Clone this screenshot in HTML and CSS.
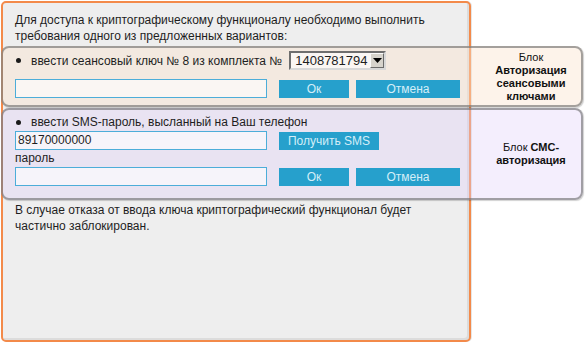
FILE: index.html
```html
<!DOCTYPE html>
<html lang="ru">
<head>
<meta charset="utf-8">
<title>Авторизация</title>
<link rel="stylesheet" href="styles.css">
</head>
<body>
<div class="panel">
  <p class="intro">Для доступа к криптографическому функционалу необходимо выполнить<br>требования одного из предложенных вариантов:</p>

  <div class="block block-keys">
    <div class="block-main">
      <div class="row bullet-row">
        <span class="dot"></span>
        <span class="label-text">ввести сеансовый ключ № 8 из комплекта №</span>
        <div class="select">
          <span class="select-value">1408781794</span>
          <span class="select-arrow"><svg width="9" height="5" viewBox="0 0 9 5"><path d="M0 0h9L4.5 5z" fill="#000"/></svg></span>
        </div>
      </div>
      <div class="row input-row">
        <div class="input"></div>
        <button class="btn btn-ok">Ок</button>
        <button class="btn btn-cancel">Отмена</button>
      </div>
    </div>
    <div class="block-label"><div>Блок<br><b>Авторизация сеансовыми ключами</b></div></div>
  </div>

  <div class="block block-sms">
    <div class="block-main">
      <div class="row text-row">
        <span class="dot"></span>
        <span class="label-text">ввести SMS-пароль, высланный на Ваш телефон</span>
      </div>
      <div class="row input-row tight">
        <div class="input">89170000000</div>
        <button class="btn btn-sms">Получить SMS</button>
      </div>
      <div class="field-label">пароль</div>
      <div class="row input-row tight">
        <div class="input"></div>
        <button class="btn btn-ok">Ок</button>
        <button class="btn btn-cancel">Отмена</button>
      </div>
    </div>
    <div class="block-label"><div>Блок <b>СМС-</b><br><b>авторизация</b></div></div>
  </div>

  <p class="outro">В случае отказа от ввода ключа криптографический функционал будет<br>частично заблокирован.</p>
</div>
</body>
</html>
```

FILE: styles.css
```css
html, body {
  margin: 0;
  padding: 0;
  background: #ffffff;
}

body {
  font-family: "Liberation Sans", Arial, sans-serif;
  font-size: 12px;
  color: #1e1e1e;
}

.panel {
  box-sizing: border-box;
  margin: 1px 0 0 1px;
  width: 470px;
  height: 341px;
  border: 2px solid #f38a4a;
  border-radius: 5px;
  background: #eeeeee;
  box-shadow: inset -2px -2px 0 #dcdcdc, 1px 0 0 #e6e6e6;
  padding-top: 9px;
}

.intro,
.outro {
  margin: 0;
  padding-left: 12px;
  line-height: 16px;
  white-space: nowrap;
}

.intro {
  margin-bottom: 2px;
}

.outro {
  margin-top: 2px;
}

.block {
  box-sizing: border-box;
  display: flex;
  width: 582px;
  margin-left: -2px;
  border: 2px solid rgba(105, 105, 105, 0.6);
  border-radius: 8px;
  box-shadow: 1px 1px 1px rgba(0, 0, 0, 0.18);
}

.block-keys {
  height: 61px;
  background: rgba(250, 226, 205, 0.42);
}

.block-sms {
  height: 92px;
  margin-top: 1px;
  background: rgba(225, 210, 250, 0.38);
}

.block-main {
  width: 478px;
  padding-left: 12px;
  box-sizing: border-box;
}

.block-keys .block-main {
  padding-top: 3px;
}

.block-sms .block-main {
  padding-top: 4px;
}

.block-label {
  flex: 1;
  display: flex;
  flex-direction: column;
  justify-content: center;
  text-align: center;
  font-size: 11px;
  line-height: 13px;
  color: #111;
}

.block-label b {
  font-weight: bold;
}

.row {
  display: flex;
  align-items: center;
}

.bullet-row {
  height: 19px;
}

.text-row {
  height: 16px;
}

.dot {
  width: 5px;
  height: 5px;
  border-radius: 50%;
  background: #1a1a1a;
  margin-left: 1px;
  margin-right: 10px;
}

.label-text {
  white-space: nowrap;
}

.select {
  box-sizing: border-box;
  display: flex;
  align-items: center;
  justify-content: space-between;
  width: 97px;
  height: 19px;
  margin-left: 7px;
  border: 2px solid;
  border-color: #6e6e6e #d8d8d8 #d8d8d8 #6e6e6e;
  background: rgba(255, 255, 255, 0.6);
  padding-left: 4px;
  font-size: 13px;
}

.select-arrow {
  display: flex;
  align-items: center;
  justify-content: center;
  width: 14px;
  height: 15px;
  background: #d6d3cc;
  border-left: 1px solid #fafafa;
  border-top: 1px solid #fafafa;
  border-right: 1px solid #6b6b6b;
  border-bottom: 1px solid #6b6b6b;
  box-sizing: border-box;
}

.input-row {
  height: 19px;
}

.block-keys .input-row {
  margin-top: 9px;
}

.input-row.tight {
  margin-top: 1px;
}

.input {
  box-sizing: border-box;
  width: 252px;
  height: 19px;
  border: 1px solid #4cadd9;
  background: rgba(255, 255, 255, 0.6);
  padding-left: 2px;
  line-height: 17px;
  margin-right: 12px;
}

.btn {
  box-sizing: border-box;
  height: 18px;
  border: none;
  padding: 0;
  background: #26a0cc;
  color: #d4eef8;
  font-family: "Liberation Sans", Arial, sans-serif;
  font-size: 12px;
  line-height: 18px;
}

.btn-ok {
  width: 70px;
  margin-right: 7px;
}

.btn-cancel {
  width: 104px;
}

.btn-sms {
  width: 100px;
}

.field-label {
  line-height: 16px;
}
```
